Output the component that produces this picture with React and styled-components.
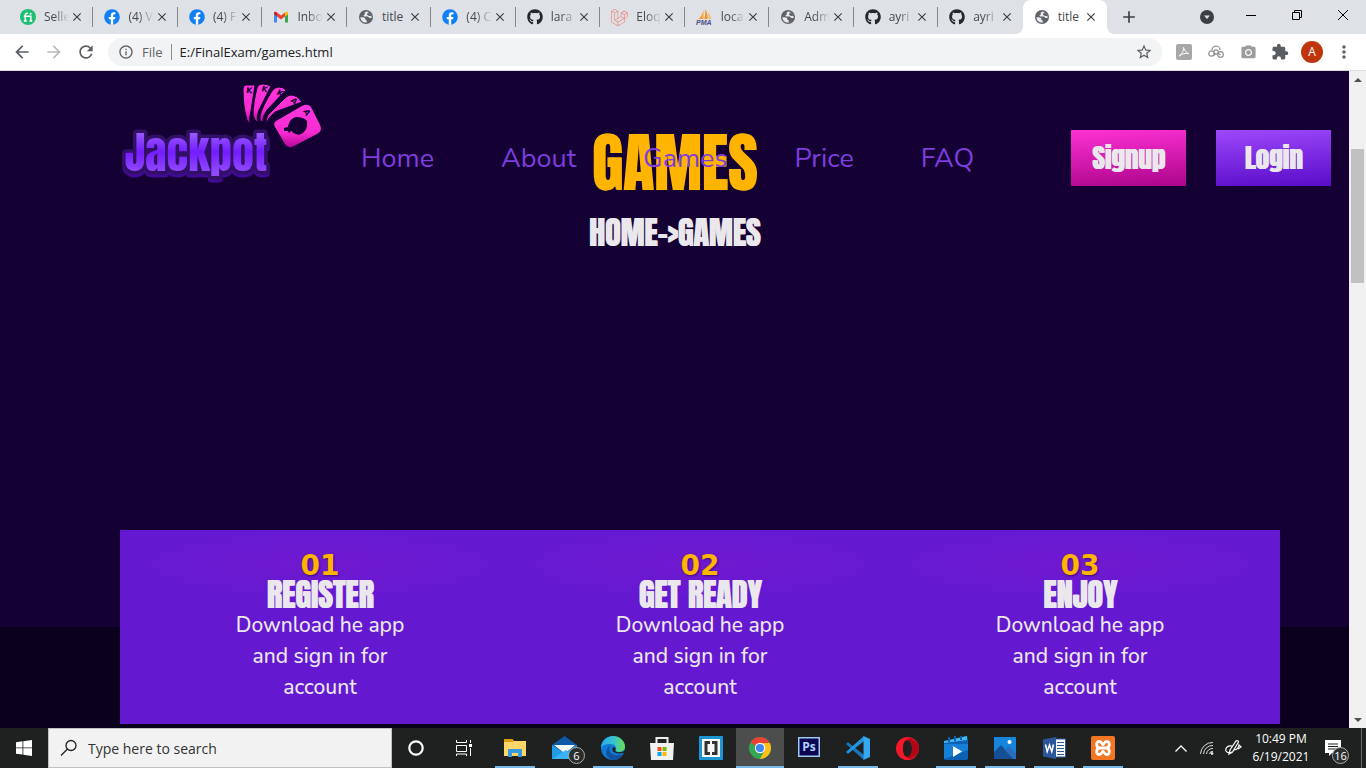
import React from 'react';
import styled, { createGlobalStyle, css } from 'styled-components';
import {
  MdArrowBack, MdArrowForward, MdRefresh, MdInfoOutline, MdStarBorder,
  MdPhotoCamera, MdExtension, MdMoreVert, MdClose, MdAdd,
} from 'react-icons/md';
import { FaGithub, FaFacebook, FaLaravel } from 'react-icons/fa';

const uiFont = `'Segoe UI', 'Open Sans', 'Noto Sans', sans-serif`;
const displayFont = `Anton, 'Liberation Sans Narrow', sans-serif`;
const bodyFont = `Nunito, Lato, sans-serif`;

/* Display type: the regular cut, thickened sideways only */
const displayType = css`
  font-family: ${displayFont};
  font-weight: 400;
  text-shadow: 1px 0 0 currentColor;
`;

const Global = createGlobalStyle`
  *, *::before, *::after { box-sizing: border-box; }
  html, body, #root { height: 100%; }
  body { margin: 0; font-family: ${uiFont}; background: #0a001b; overflow: hidden; }
  button, input { font: inherit; color: inherit; border: 0; padding: 0; margin: 0; background: none; }
  a { color: inherit; text-decoration: none; }
  svg { display: block; flex: none; }
  h1, h2, p { margin: 0; }
`;

const Screen = styled.div`
  height: 100%;
  display: flex;
  flex-direction: column;
`;

/* ---------- browser chrome ---------- */

const TabStrip = styled.header`
  height: 34px;
  flex: none;
  display: flex;
  padding-left: 9px;
  background: #dee1e6;
`;

const TabList = styled.div`
  flex: 1;
  min-width: 0;
  display: flex;
`;

const Tab = styled.div`
  flex: 1 1 0;
  min-width: 0;
  position: relative;
  display: flex;
  align-items: center;
  padding: 0 8px 0 11px;
  color: #45494d;
  ${(p) => p.$divider && css`
    &::after {
      content: '';
      position: absolute;
      right: 0;
      top: 7px;
      height: 20px;
      width: 1px;
      background: #85888c;
    }
  `}
  ${(p) => p.$active && css`
    background: #fff;
    border-radius: 8px 8px 0 0;
    &::before, &::after {
      content: '';
      position: absolute;
      bottom: 0;
      width: 8px;
      height: 8px;
    }
    &::before { left: -8px; background: radial-gradient(circle at 0 0, transparent 8px, #fff 8px); }
    &::after { right: -8px; background: radial-gradient(circle at 100% 0, transparent 8px, #fff 8px); }
  `}
`;

const TabButton = styled.button`
  flex: 1;
  min-width: 0;
  display: flex;
  align-items: center;
  gap: 8px;
  font-size: 12px;
  line-height: 16px;
  text-align: left;
`;

const TabTitle = styled.span`
  flex: 1;
  min-width: 0;
  overflow: hidden;
  white-space: nowrap;
  ${(p) => p.$fade && css`
    mask-image: linear-gradient(90deg, #000 40%, transparent);
  `}
`;

const IconButton = styled.button`
  display: flex;
  align-items: center;
  justify-content: center;
  flex: none;
  width: ${(p) => p.$size || 32}px;
  height: ${(p) => p.$size || 32}px;
  color: ${(p) => p.$color || '#5a5e63'};
`;

const WindowControls = styled.div`
  width: 259px;
  flex: none;
  display: flex;
  align-items: center;
  padding-left: 6px;
  color: #3c4043;
`;

const ControlGroup = styled.div`
  margin-left: auto;
  display: flex;
  align-items: center;
`;

const TabSearch = styled(IconButton)`
  margin-right: 5px;
`;

const WindowButton = styled(IconButton)`
  width: 46px;
  height: 30px;
  color: #000;
  margin-bottom: 4px;
`;

const Toolbar = styled.div`
  height: 37px;
  flex: none;
  display: flex;
  align-items: center;
  padding: 0 6px;
  background: #fff;
  border-bottom: 1px solid #dcdee1;
`;

const Omnibox = styled.div`
  flex: 1;
  height: 28px;
  margin: 0 6px;
  padding: 0 10px;
  display: flex;
  align-items: center;
  gap: 8px;
  border-radius: 14px;
  background: #f1f3f4;
  color: #5f6368;
  font-size: 13px;
`;

const Divider = styled.span`
  width: 1px;
  height: 16px;
  background: #8a8d91;
`;

const UrlInput = styled.input`
  flex: 1;
  min-width: 0;
  color: #202124;
  outline: none;
`;

const Avatar = styled.button`
  width: 22px;
  height: 22px;
  margin: 0 5px;
  border-radius: 50%;
  background: #bf360c;
  color: #fff;
  font-size: 12px;
  line-height: 22px;
`;

/* ---------- page ---------- */

const Viewport = styled.div`
  flex: 1;
  min-height: 0;
  display: flex;
`;

const Page = styled.main`
  flex: 1;
  min-width: 0;
  position: relative;
  overflow: hidden;
  background: #0a001b;
`;

const SiteHeader = styled.header`
  position: absolute;
  inset: 0 0 auto 0;
  z-index: 2;
  display: flex;
  align-items: flex-start;
  padding: 9px 18px 0 120px;
`;

const NavLinks = styled.nav`
  display: flex;
  gap: 67px;
  margin: 59px 0 0 38px;
  font-family: ${bodyFont};
  font-size: 27px;
  line-height: 40px;
  color: #7e3ddf;
`;

const AuthButtons = styled.div`
  display: flex;
  gap: 30px;
  margin: 50px 0 0 auto;
`;

const AuthButton = styled.button`
  width: 115px;
  height: 56px;
  ${displayType}
  font-size: 27px;
  line-height: 56px;
  color: #ebe8ed;
  background: ${(p) => (p.$tone === 'pink'
    ? 'linear-gradient(176deg, #fd31d3, #ac058b)'
    : 'linear-gradient(176deg, #9d48fb, #590cc8)')};
`;

const Hero = styled.section`
  height: 556px;
  padding-top: 46px;
  background: #150033;
  text-align: center;
`;

const HeroTitle = styled.h1`
  ${displayType}
  font-size: 64px;
  line-height: 92px;
  color: #ffb400;
`;

const Breadcrumb = styled.p`
  ${displayType}
  font-size: 32px;
  line-height: 48px;
  color: #ebe8ed;
`;

const Steps = styled.section`
  position: relative;
  z-index: 1;
  margin: -97px 69px 0 120px;
  padding: 0 10px;
  display: grid;
  grid-template-columns: repeat(3, 1fr);
  background: #6419d1;
`;

const Step = styled.article`
  display: flex;
  flex-direction: column;
  align-items: center;
  padding: 23px 0 21px;
  text-align: center;
  color: #ebe8ed;
  background: radial-gradient(ellipse 180px 34px at 50% 34px, #7119cf, #6419d1);
`;

const StepNumber = styled.span`
  font-family: 'DejaVu Sans', sans-serif;
  font-weight: 700;
  font-size: 28px;
  line-height: 26px;
  color: #ffb400;
  text-shadow: 1px 1px 2px #3d0a78;
`;

const StepTitle = styled.h2`
  ${displayType}
  font-size: 32px;
  line-height: 31px;
`;

const StepText = styled.p`
  width: 190px;
  font-family: ${bodyFont};
  font-weight: 500;
  font-size: 21px;
  line-height: 31px;
`;

const ScrollBar = styled.div`
  width: 17px;
  flex: none;
  display: flex;
  flex-direction: column;
  align-items: center;
  background: #f1f1f1;
`;

const ScrollArrow = styled(IconButton)`
  width: 17px;
  height: 17px;
  color: #505050;
`;

const ScrollTrack = styled.div`
  flex: 1;
  padding-top: 61px;
`;

const ScrollThumb = styled.div`
  width: 13px;
  height: 134px;
  background: #c1c1c1;
`;

/* ---------- taskbar ---------- */

const Taskbar = styled.footer`
  height: 40px;
  flex: none;
  display: flex;
  background: #1e2120;
  color: #fff;
`;

const TaskButton = styled.button`
  width: 48px;
  height: 40px;
  flex: none;
  display: flex;
  align-items: center;
  justify-content: center;
  position: relative;
  background: ${(p) => (p.$active ? '#4c4e4d' : 'transparent')};
  ${(p) => p.$running && css`
    &::after {
      content: '';
      position: absolute;
      bottom: 0;
      left: ${p.$active ? 0 : 4}px;
      right: ${p.$active ? 0 : 4}px;
      height: 2px;
      background: #76b9ed;
    }
  `}
`;

const NotificationButton = styled(TaskButton)`
  width: 45px;
  padding-right: 11px;
`;

const SearchBox = styled.label`
  width: 344px;
  display: flex;
  align-items: center;
  gap: 10px;
  padding: 0 11px;
  border: 1px solid #c0c0c0;
  background: #f2f2f2;
  color: #222;
  font-size: 14px;
`;

const SearchInput = styled.input`
  flex: 1;
  min-width: 0;
  outline: none;
  &::placeholder { color: #333; opacity: 1; }
`;

const Apps = styled.div`
  display: flex;
  gap: 1px;
  margin-left: 3px;
`;

const Badge = styled.span`
  position: absolute;
  right: ${(p) => p.$right || 3}px;
  bottom: 4px;
  width: 17px;
  height: 17px;
  border: 1px solid #aaa;
  border-radius: 50%;
  background: #2b2e2e;
  color: #fff;
  font-size: 11px;
  line-height: 15px;
  text-align: center;
`;

const Tray = styled.div`
  margin-left: auto;
  display: flex;
  align-items: center;
`;

const TrayButton = styled(IconButton)`
  width: 26px;
  height: 40px;
  color: #fff;
`;

const Clock = styled.button`
  width: 70px;
  font-size: 12px;
  line-height: 18px;
  text-align: center;
`;

const ShowDesktop = styled.button`
  width: 5px;
  height: 40px;
  border-left: 1px solid #6b6d6d;
`;

/* ---------- favicons ---------- */

const Fiverr = () => (
  <svg width="16" height="16" viewBox="0 0 16 16">
    <circle cx="8" cy="8" r="8" fill="#1dbf73" />
    <path d="M5.300 12V6.200c0-1.300.7-1.900 2-1.900h.7M3.800 7.200h7v4.800M3.800 12h3M9.500 12h2.800" fill="none" stroke="#fff" strokeWidth="1.500" />
    <circle cx="10.600" cy="4.700" r="1" fill="#fff" />
  </svg>
);
const Facebook = () => (
  <svg width="16" height="16" viewBox="0 0 16 16">
    <circle cx="8" cy="8" r="7" fill="#fff" />
    <FaFacebook size={16} color="#1180f5" />
  </svg>
);
const Gmail = () => (
  <svg width="16" height="16" viewBox="0 0 16 16">
    <path d="M1 13.400h3V7L1 4.800z" fill="#4285f4" />
    <path d="M12 13.400h3V4.800L12 7z" fill="#34a853" />
    <path d="M4 3.600v3.800l4 3 4-3V3.600l-4 3z" fill="#ea4335" />
    <path d="M1 4v1.200l3 2.200V3.600C2.600 2.200 1 2.600 1 4z" fill="#c5221f" />
    <path d="M15 4v1.200l-3 2.200V3.600c1.400-1.400 3-1 3 .4z" fill="#fbbc04" />
  </svg>
);
const Globe = () => (
  <svg width="16" height="16" viewBox="0 0 16 16">
    <circle cx="8" cy="8" r="7" fill="#5f6368" />
    <path d="M2.400 8.200h2.300c1.700 0 2.700.8 2.700 2 0 .8.600 1.200 1.400 1.200v2.100c-3.200.5-6.200-1.700-6.400-5.300z" fill="#e8eaed" />
    <path d="M8.400 2.400C7 2.800 6.200 3.800 6.800 4.600c.5.700-.2 1.200-.9 1.500-.8.400-.4 1.400.6 1.400h3c1.100 0 1.200 1.600 2.300 1.600h1.800c.3-3.200-1.800-6-5.200-6.700z" fill="#e8eaed" />
    <path d="M9.800 3.200c.3 1.300-.8 1.500-.8 2.400 0 .8 1.500.6 1.800 1.400h2.600c-.4-1.900-1.800-3.300-3.600-3.800z" fill="#5f6368" />
  </svg>
);
const Github = () => <FaGithub size={16} color="#24292e" />;
const Laravel = () => <FaLaravel size={17} color="#f3716a" />;
const PhpMyAdmin = () => (
  <svg width="17" height="17" viewBox="0 0 17 17">
    <path d="M7.500 1v9H2.500C4.600 8 6.700 5 7.500 1z" fill="#f9a13a" />
    <path d="M9 0c2 3 3 6.500 2.500 10H8.200C9.200 7 9.400 4 9 0z" fill="#f79421" />
    <path d="M12 3c1.800 2.300 2.800 4.500 3 7h-2.600c.3-2.300.2-4.500-.4-7z" fill="#fbb867" />
    <text x="0" y="16" fontFamily="Liberation Sans" fontWeight="700" fontStyle="italic" fontSize="7" fill="#4b4f87">PMA</text>
  </svg>
);

const tabs = [
  ['Selle', Fiverr, true], ['(4) V', Facebook, true], ['(4) F', Facebook, true],
  ['Inbo', Gmail, true], ['title', Globe, false], ['(4) C', Facebook, true],
  ['lara', Github, true], ['Eloq', Laravel, true], ['loca', PhpMyAdmin, true],
  ['Adm', Globe, true], ['ayri', Github, true], ['ayri', Github, true],
  ['title', Globe, false],
];

/* ---------- logo ---------- */

const cards = [
  { d: 'M125 4q-3 0-3 4 0 18 4 31l3 4q-1-6 1-13l4-26z', k: 'K', x: 125, y: 12, r: 4 },
  { d: 'M141 3q-4 0-5 4-4 16-4 27 1 5 5 8-2-6 1-13l12-24q-4-2-9-2z', k: 'K', x: 140, y: 10, r: 14 },
  { d: 'M158 6q-4 0-7 4-10 16-12 25-1 5 3 6-1-5 4-12l19-20q-3-3-7-3z', k: 'K', x: 155, y: 13, r: 28 },
  { d: 'M170 14q-3 0-6 3l-17 17q-3 4-1 8 1-5 8-11l27-10q-5-7-11-7z', k: 'A', x: 169, y: 20, r: 42 },
];

const LogoWord = styled.g`
  font-family: ${displayFont};
  font-size: 44px;
  text-anchor: middle;
  paint-order: stroke;
  stroke: #321065;
  stroke-width: 7px;
  stroke-linejoin: round;
  filter: drop-shadow(0 3px 0 #430a97);
`;

const LogoRank = styled.text`
  font-family: 'DejaVu Sans', sans-serif;
  font-weight: 700;
  font-size: 8px;
  fill: #150033;
`;

const Logo = () => (
  <svg width="203" height="110" viewBox="-1 -1 203 110" role="img" aria-label="Jackpot">
    <defs>
      <linearGradient id="word" x1="0" y1="0" x2="0" y2="1">
        <stop offset=".2" stopColor="#9a5cff" /><stop offset=".5" stopColor="#731cff" /><stop offset=".8" stopColor="#9149fd" />
      </linearGradient>
      <linearGradient id="card" x1="0" y1="0" x2="0" y2="1">
        <stop offset="0" stopColor="#ff36de" /><stop offset=".65" stopColor="#f82bd0" /><stop offset="1" stopColor="#b6079b" />
      </linearGradient>
    </defs>
    {cards.map((c) => (
      <g key={c.d}>
        <path d={c.d} fill="url(#card)" />
        <path d={c.d} fill="none" stroke="#150033" strokeWidth="1" />
        <LogoRank x={c.x} y={c.y} transform={`rotate(${c.r} ${c.x} ${c.y})`}>{c.k}</LogoRank>
      </g>
    ))}
    <path d="M155 40l26-15q6-3 9 1l9 18q3 6-3 9l-23 12q-6 3-9-2l-10-17q-2-4 1-6z" fill="url(#card)" />
    <path d="M167 45q2-8 8-9 8 0 11 4 1 7-3 11-4 4-8 2-4-1-5-4 0 2-2 3l-1-2-4 0 0-3 4-1z" fill="#150033" />
    <LogoRank x="182" y="30" transform="rotate(60 182 30)">A</LogoRank>
    <LogoWord>
      <text x="75" y="90" fill="url(#word)">Jackpot</text>
    </LogoWord>
  </svg>
);

/* ---------- taskbar icons ---------- */

const Windows = () => (
  <svg width="16" height="16" viewBox="0 0 16 16" fill="#fff">
    <path d="M0 2.200L6.500 1.300V7.500H0zM7.300 1.200L16 0v7.500H7.300zM0 8.300h6.500v6.300L0 13.700zM7.300 8.300H16V16l-8.700-1.200z" />
  </svg>
);
const SearchGlyph = () => (
  <svg width="18" height="18" viewBox="0 0 18 18" fill="none" stroke="#222" strokeWidth="1.300">
    <circle cx="11" cy="6.500" r="5" /><path d="M7.500 10L1 16.500" />
  </svg>
);
const Cortana = () => (
  <svg width="18" height="18" viewBox="0 0 18 18"><circle cx="9" cy="9" r="6.700" fill="none" stroke="#fff" strokeWidth="2.200" /></svg>
);
const TaskView = () => (
  <svg width="18" height="18" viewBox="0 0 18 18" fill="none" stroke="#fff">
    <path d="M1.500 1v2.500h10V1M1.500 6.500h10v6h-10zM1.500 17v-2h10v2M15.500 1v3M15.500 9v8" /><path d="M14 5h3v3h-3z" fill="#fff" stroke="none" />
  </svg>
);
const Explorer = () => (
  <svg width="22" height="20" viewBox="0 0 22 20">
    <path d="M0 1h8l2 2h12v15H0z" fill="#ffd667" /><path d="M0 1h8l2 2-1 1H0z" fill="#e0a00d" />
    <path d="M4 19v-8h14v8h-4v-4H8v4z" fill="#3a9ae0" />
  </svg>
);
const Mail = () => (
  <svg width="25" height="24" viewBox="0 0 25 24">
    <path d="M0 9L12.500 0 25 9v3H0z" fill="#0f5aa8" /><path d="M2 9h21l-10 9z" fill="#f3f5f7" />
    <path d="M0 9l12.500 8L25 9v14H0z" fill="#1d9ce8" /><path d="M0 23L14 14l11 9z" fill="#39b3f5" />
  </svg>
);
const Edge = () => (
  <svg width="24" height="24" viewBox="0 0 24 24">
    <defs><linearGradient id="edgeTop"><stop offset="0" stopColor="#2aa9e8" /><stop offset=".5" stopColor="#35c1d6" /><stop offset="1" stopColor="#67e04e" /></linearGradient></defs>
    <circle cx="12" cy="12" r="12" fill="#1279d4" />
    <path d="M0 12C0 5 5.500 0 12 0s12 5 12 10.500c0 4-3.500 5.500-6.500 5.500-3 0-4-1-3-2.500C16 11 13.500 8 9.500 8 5 8 1 9.500 0 12z" fill="url(#edgeTop)" />
    <path d="M9 9c-3 6 2 13 13 9-2 4-6 6-10 6C6 23 2 16 9 9z" fill="#11529f" />
    <path d="M12.500 11c-3 3 0 8 10 6l1.500 1v-4c-2 3-11 3-9.500-.5.500-1 0-2.500-2-2.500z" fill="#1e2120" />
  </svg>
);
const Store = () => (
  <svg width="24" height="25" viewBox="0 0 24 25">
    <path d="M6.500 8V2h11v6" fill="none" stroke="#ededed" strokeWidth="2" /><path d="M0 7h24l-1 17H1z" fill="#f1f1f1" />
    <path d="M7.500 11h4v4h-4z" fill="#f25022" /><path d="M12.500 11h4v4h-4z" fill="#7fba00" /><path d="M7.500 16h4v4h-4z" fill="#00a4ef" /><path d="M12.500 16h4v4h-4z" fill="#ffb900" />
  </svg>
);
const Brackets = () => (
  <svg width="24" height="24" viewBox="0 0 24 24">
    <rect width="24" height="24" rx="1" fill="#1f96d4" /><rect x="3" y="3" width="18" height="18" fill="#f7f7f7" />
    <path d="M11 6.500H7v11h4M13 6.500h4v11h-4" fill="none" stroke="#333" strokeWidth="3" />
  </svg>
);
const Chrome = () => (
  <svg width="22" height="22" viewBox="0 0 22 22">
    <circle cx="11" cy="11" r="11" fill="#33a852" />
    <path d="M11 11L1.500 5.500A11 11 0 0 1 20.500 5.500z" fill="#ea4335" />
    <path d="M11 6h9.800A11 11 0 0 1 11 22l4.500-8.500z" fill="#fbc116" />
    <circle cx="11" cy="11" r="5.200" fill="#fff" /><circle cx="11" cy="11" r="4.100" fill="#4285f4" />
  </svg>
);
const Photoshop = () => (
  <svg width="22" height="24" viewBox="0 0 22 24">
    <rect x=".75" y="1.750" width="20.500" height="18.500" fill="#0c0550" stroke="#9fc9f5" strokeWidth="1.500" />
    <text x="11" y="15" textAnchor="middle" fontFamily="Open Sans" fontWeight="700" fontSize="12" fill="#a9d2ff">Ps</text>
  </svg>
);
const VsCode = () => (
  <svg width="24" height="24" viewBox="0 0 24 24">
    <path d="M0 8l2-1.700L18 19v5L0 8z" fill="#1b76bd" /><path d="M0 16l2 1.700L18 5V0L0 16z" fill="#2196e0" />
    <path d="M17.500 0L24 3v18l-6.500 3z" fill="#35a8f0" />
  </svg>
);
const Opera = () => (
  <svg width="23" height="23" viewBox="0 0 23 23">
    <path fillRule="evenodd" d="M11.500 0a11.500 11.500 0 1 0 0 23 11.500 11.500 0 1 0 0-23zm0 3c3 0 4.500 3.500 4.500 8.500S14.500 20 11.500 20 7 16.500 7 11.500 8.500 3 11.500 3z" fill="#f5172c" />
    <path d="M15 1.500c5 2 8 6 8 10s-3 8.500-8 10c-2 .5-3.500-.5-4.500-2 3.500 0 5.500-3.500 5.500-8S14 3 10.500 3.500c1-1.500 2.500-2.500 4.500-2z" fill="#b00718" />
  </svg>
);
const Movies = () => (
  <svg width="24" height="24" viewBox="0 0 24 24">
    <path d="M0 6L23 0l1 4v18q0 2-2 2H2q-2 0-2-2z" fill="#0d61b5" /><path d="M0 5L23 0v4L0 7z" fill="#3db9ee" />
    <path d="M0 8h24v6L0 23z" fill="#1680d8" /><path d="M5 1v5M11 0v5M17 0v4" stroke="#0d61b5" strokeWidth="2" /><path d="M9 10l9 5.500L9 21z" fill="#fff" />
  </svg>
);
const Photos = () => (
  <svg width="22" height="22" viewBox="0 0 22 22">
    <rect width="22" height="22" fill="#1686dd" /><path d="M0 15L7 8l13 14H0z" fill="#174f94" /><path d="M11 13l4-4 7 7v6h-3z" fill="#2b6bc0" /><circle cx="15.500" cy="5" r="2" fill="#fff" />
  </svg>
);
const Word = () => (
  <svg width="23" height="22" viewBox="0 0 23 22">
    <rect x="12" y="2" width="10.500" height="18" fill="#fff" stroke="#2b579a" /><path d="M14 5.500h7M14 8.500h7M14 11.500h7M14 14.500h7M14 17.500h7" stroke="#2b579a" />
    <path d="M0 2.500L13 0v22L0 19.500z" fill="#2b579a" /><path d="M2.500 7.500l1.700 7 2.300-6.500 2.300 6.500 1.700-7" fill="none" stroke="#fff" strokeWidth="1.500" />
  </svg>
);
const Xampp = () => (
  <svg width="24" height="24" viewBox="0 0 24 24">
    <rect width="24" height="24" rx="2" fill="#f37623" />
    <path d="M9 12H15M9 12C5 12 4.500 5.500 8 5.500s2.500 3 4 3 .5-3 4-3 3 6.500-1 6.500c4 0 4.500 6.500 1 6.500s-2.500-3-4-3-.5 3-4 3-3-6.500 1-6.500z" fill="none" stroke="#fff" strokeWidth="2.800" />
  </svg>
);

const apps = [
  { name: 'File Explorer', Icon: Explorer, running: true },
  { name: 'Mail', Icon: Mail, badge: '6' },
  { name: 'Edge', Icon: Edge, running: true },
  { name: 'Store', Icon: Store },
  { name: 'Brackets', Icon: Brackets },
  { name: 'Chrome', Icon: Chrome, running: true, active: true },
  { name: 'Photoshop', Icon: Photoshop },
  { name: 'VS Code', Icon: VsCode, running: true },
  { name: 'Opera', Icon: Opera },
  { name: 'Movies', Icon: Movies, running: true },
  { name: 'Photos', Icon: Photos, running: true },
  { name: 'Word', Icon: Word, running: true },
  { name: 'XAMPP', Icon: Xampp, running: true },
];

const steps = [['01', 'REGISTER'], ['02', 'GET READY'], ['03', 'ENJOY']];

export default function App() {
  return (
    <Screen>
      <Global />
      <TabStrip>
        <TabList>
          {tabs.map(([title, Icon, fade], i) => (
            <Tab key={i} $active={i === 12} $divider={i < 11}>
              <TabButton><Icon /><TabTitle $fade={fade}>{title}</TabTitle></TabButton>
              <IconButton $size={16} $color="#3c4043" aria-label="Close tab"><MdClose size={14} /></IconButton>
            </Tab>
          ))}
        </TabList>
        <WindowControls>
          <IconButton $color="#3c4043" aria-label="New tab"><MdAdd size={20} /></IconButton>
          <ControlGroup>
            <TabSearch aria-label="Search tabs">
              <svg width="14" height="14" viewBox="0 0 14 14"><circle cx="7" cy="7" r="7" fill="#3c4043" /><path d="M4 5.500h6L7 9z" fill="#dee1e6" /></svg>
            </TabSearch>
            <WindowButton aria-label="Minimize"><svg width="10" height="10"><path d="M0 5.500h10" stroke="#000" /></svg></WindowButton>
            <WindowButton aria-label="Restore"><svg width="10" height="10" fill="none" stroke="#000"><path d="M.5 2.500h7v7h-7zM2.500 2.500v-2h7v7h-2" /></svg></WindowButton>
            <WindowButton aria-label="Close"><svg width="10" height="10" stroke="#000"><path d="M0 0l10 10M10 0L0 10" /></svg></WindowButton>
          </ControlGroup>
        </WindowControls>
      </TabStrip>
      <Toolbar>
        <IconButton aria-label="Back"><MdArrowBack size={20} /></IconButton>
        <IconButton $color="#b9bbbe" aria-label="Forward"><MdArrowForward size={20} /></IconButton>
        <IconButton aria-label="Reload"><MdRefresh size={20} /></IconButton>
        <Omnibox>
          <MdInfoOutline size={16} />
          <span>File</span>
          <Divider />
          <UrlInput aria-label="Address" defaultValue="E:/FinalExam/games.html" />
          <IconButton $size={16} aria-label="Bookmark"><MdStarBorder size={18} /></IconButton>
        </Omnibox>
        <IconButton aria-label="PDF">
          <svg width="16" height="16" viewBox="0 0 16 16"><rect width="16" height="16" rx="2" fill="#a8a8a8" /><path d="M3 12c2-1 5-5 4.500-8.500C9 7 11 9.500 13 9.500 9 9 6 10 3 12z" fill="none" stroke="#fff" /></svg>
        </IconButton>
        <IconButton aria-label="Cloud">
          <svg width="16" height="14" viewBox="0 0 16 14" fill="none" stroke="#8f8f8f" strokeWidth="1.200"><circle cx="3.500" cy="8.500" r="2.700" /><circle cx="12.500" cy="9.500" r="2.800" /><circle cx="8" cy="7" r="2.200" /><path d="M4 5a4 4 0 0 1 8 0M5.500 10.500l2.500-2M10 8l2.500 2" /></svg>
        </IconButton>
        <IconButton $color="#9b9b9b" aria-label="Camera"><MdPhotoCamera size={17} /></IconButton>
        <IconButton aria-label="Extensions"><MdExtension size={18} /></IconButton>
        <Avatar>A</Avatar>
        <IconButton aria-label="Menu"><MdMoreVert size={20} /></IconButton>
      </Toolbar>

      <Viewport>
        <Page>
          <SiteHeader>
            <a href="#home"><Logo /></a>
            <NavLinks>
              {['Home', 'About', 'Games', 'Price', 'FAQ'].map((l) => <a key={l} href={`#${l}`}>{l}</a>)}
            </NavLinks>
            <AuthButtons>
              <AuthButton $tone="pink">Signup</AuthButton>
              <AuthButton $tone="violet">Login</AuthButton>
            </AuthButtons>
          </SiteHeader>
          <Hero>
            <HeroTitle>GAMES</HeroTitle>
            <Breadcrumb>HOME-&gt;GAMES</Breadcrumb>
          </Hero>
          <Steps>
            {steps.map(([n, title]) => (
              <Step key={n}>
                <StepNumber>{n}</StepNumber>
                <StepTitle>{title}</StepTitle>
                <StepText>Download he app and sign in for account</StepText>
              </Step>
            ))}
          </Steps>
        </Page>
        <ScrollBar>
          <ScrollArrow aria-label="Scroll up"><svg width="8" height="4"><path d="M0 4l4-4 4 4z" fill="#505050" /></svg></ScrollArrow>
          <ScrollTrack><ScrollThumb /></ScrollTrack>
          <ScrollArrow aria-label="Scroll down"><svg width="8" height="4"><path d="M0 0l4 4 4-4z" fill="#505050" /></svg></ScrollArrow>
        </ScrollBar>
      </Viewport>

      <Taskbar>
        <TaskButton aria-label="Start"><Windows /></TaskButton>
        <SearchBox>
          <SearchGlyph />
          <SearchInput aria-label="Search" placeholder="Type here to search" />
        </SearchBox>
        <TaskButton aria-label="Cortana"><Cortana /></TaskButton>
        <TaskButton aria-label="Task view"><TaskView /></TaskButton>
        <Apps>
          {apps.map(({ name, Icon, running, active, badge }) => (
            <TaskButton key={name} aria-label={name} $running={running} $active={active}>
              <Icon />
              {badge && <Badge>{badge}</Badge>}
            </TaskButton>
          ))}
        </Apps>
        <Tray>
          <TrayButton aria-label="Hidden icons"><svg width="12" height="7"><path d="M.5 6.500L6 1l5.500 5.500" fill="none" stroke="#fff" strokeWidth="1.300" /></svg></TrayButton>
          <TrayButton aria-label="Network">
            <svg width="14" height="14" viewBox="0 0 14 14" fill="none" stroke="#ddd"><path d="M.5 13A12 12 0 0 1 13 1.500M3.500 13A9 9 0 0 1 13 4.500M6.500 13A6 6 0 0 1 13 7.500M9.500 13A3 3 0 0 1 13 10.500" /><circle cx="12" cy="12.500" r="1" fill="#fff" /></svg>
          </TrayButton>
          <TrayButton aria-label="Pen">
            <svg width="17" height="16" viewBox="0 0 17 16" fill="none" stroke="#fff" strokeWidth="1.200"><path d="M4 14l1-4L11 1q2-1 2.500 1L7.500 12zM7 6C3 5 0 8 1 11c1 2 4 2 6 1M9 10c4 0 5-4 5-5l2 2-3 2" /></svg>
          </TrayButton>
          <Clock>10:49 PM<br />6/19/2021</Clock>
          <NotificationButton aria-label="Notifications">
            <svg width="16" height="16" viewBox="0 0 16 16"><path d="M0 0h16v13H7l-3 3v-3H0z" fill="#fff" /><path d="M3 4h10M3 6.500h10M3 9h10" stroke="#1e2120" /></svg>
            <Badge $right={12}>16</Badge>
          </NotificationButton>
          <ShowDesktop aria-label="Show desktop" />
        </Tray>
      </Taskbar>
    </Screen>
  );
}
